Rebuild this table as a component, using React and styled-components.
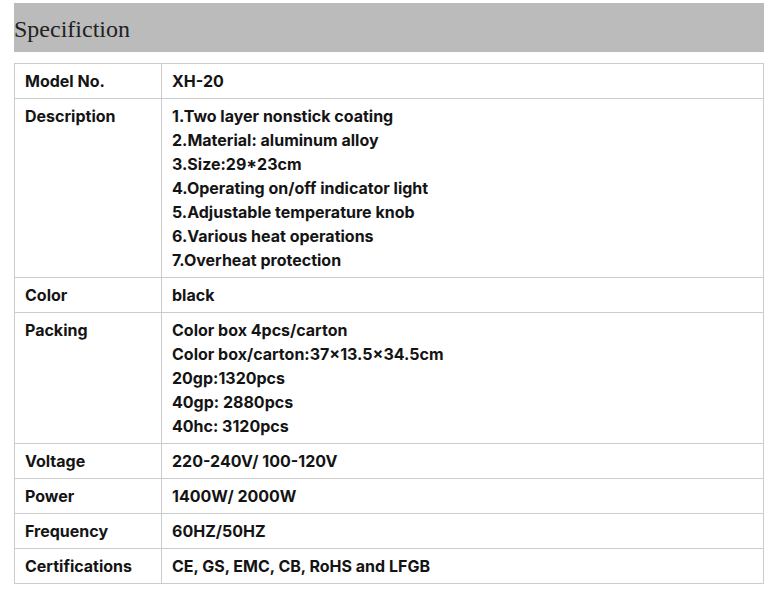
import React from 'react';
import styled, { createGlobalStyle } from 'styled-components';

const GlobalStyle = createGlobalStyle`
  body {
    margin: 0;
    background: #fff;
  }
`;

const Page = styled.div`
  padding: 3px 9px 0 14px;
  width: 750px;
`;

const TitleBar = styled.div`
  height: 49px;
  background: #bbbbbb;
  display: flex;
  align-items: center;
  font-family: 'Liberation Serif', 'Times New Roman', serif;
  font-size: 24px;
  color: #222;
  padding-top: 4px;
  box-sizing: border-box;
`;

const Table = styled.table`
  margin-top: 11px;
  width: 750px;
  border-collapse: collapse;
  font-family: Inter, 'Liberation Sans', sans-serif;
  font-size: 16px;
  font-weight: 650;
  color: #141414;
  line-height: 24px;
`;

const Cell = styled.td`
  border: 1px solid #cccccc;
  padding: 5px 10px;
  vertical-align: top;
  width: ${p => (p.$label ? '126px' : 'auto')};
`;

const rows = [
  ['Model No.', ['XH-20']],
  ['Description', [
    '1.Two layer nonstick coating',
    '2.Material: aluminum alloy',
    '3.Size:29*23cm',
    '4.Operating on/off indicator light',
    '5.Adjustable temperature knob',
    '6.Various heat operations',
    '7.Overheat protection',
  ]],
  ['Color', ['black']],
  ['Packing', [
    'Color box 4pcs/carton',
    'Color box/carton:37×13.5×34.5cm',
    '20gp:1320pcs',
    '40gp: 2880pcs',
    '40hc: 3120pcs',
  ]],
  ['Voltage', ['220-240V/ 100-120V']],
  ['Power', ['1400W/ 2000W']],
  ['Frequency', ['60HZ/50HZ']],
  ['Certifications', ['CE, GS, EMC, CB, RoHS and LFGB']],
];

export default function App() {
  return (
    <Page>
      <GlobalStyle />
      <TitleBar>Specifiction</TitleBar>
      <Table>
        <tbody>
          {rows.map(([label, lines]) => (
            <tr key={label}>
              <Cell $label>{label}</Cell>
              <Cell>
                {lines.map(l => (
                  <div key={l}>{l}</div>
                ))}
              </Cell>
            </tr>
          ))}
        </tbody>
      </Table>
    </Page>
  );
}
